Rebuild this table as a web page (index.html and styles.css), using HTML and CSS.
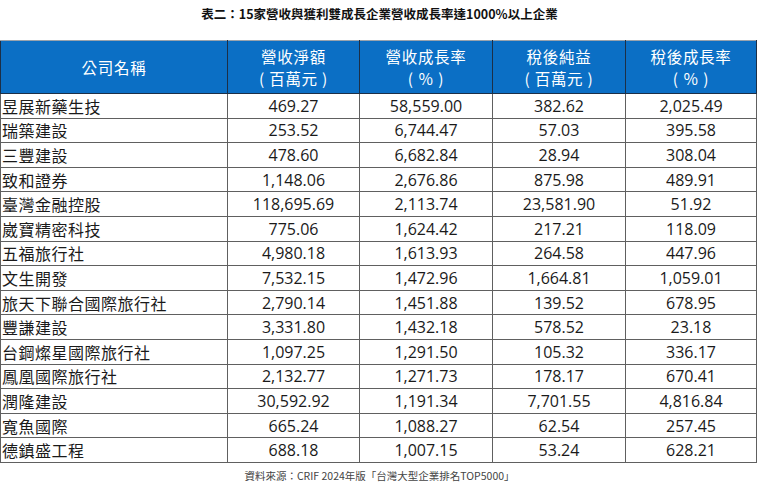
FILE: index.html
```html
<!DOCTYPE html>
<html lang="zh-Hant">
<head>
<meta charset="utf-8">
<title>表二</title>
<link rel="stylesheet" href="styles.css">
</head>
<body>
<div class="page">
  <h1 class="title">表二：15家營收與獲利雙成長企業營收成長率達1000%以上企業</h1>
  <table class="grid">
    <colgroup>
      <col class="c1"><col class="c2"><col class="c3"><col class="c4"><col class="c5">
    </colgroup>
    <thead>
      <tr>
        <th>公司名稱</th>
        <th><span class="hl">營收淨額</span><span class="hl">( 百萬元 )</span></th>
        <th><span class="hl">營收成長率</span><span class="hl">( ％ )</span></th>
        <th><span class="hl">稅後純益</span><span class="hl">( 百萬元 )</span></th>
        <th><span class="hl">稅後成長率</span><span class="hl">( ％ )</span></th>
      </tr>
    </thead>
    <tbody>
      <tr><td class="name">昱展新藥生技</td><td>469.27</td><td>58,559.00</td><td>382.62</td><td>2,025.49</td></tr>
      <tr><td class="name">瑞築建設</td><td>253.52</td><td>6,744.47</td><td>57.03</td><td>395.58</td></tr>
      <tr><td class="name">三豐建設</td><td>478.60</td><td>6,682.84</td><td>28.94</td><td>308.04</td></tr>
      <tr><td class="name">致和證券</td><td>1,148.06</td><td>2,676.86</td><td>875.98</td><td>489.91</td></tr>
      <tr><td class="name">臺灣金融控股</td><td>118,695.69</td><td>2,113.74</td><td>23,581.90</td><td>51.92</td></tr>
      <tr><td class="name">崴寶精密科技</td><td>775.06</td><td>1,624.42</td><td>217.21</td><td>118.09</td></tr>
      <tr><td class="name">五福旅行社</td><td>4,980.18</td><td>1,613.93</td><td>264.58</td><td>447.96</td></tr>
      <tr><td class="name">文生開發</td><td>7,532.15</td><td>1,472.96</td><td>1,664.81</td><td>1,059.01</td></tr>
      <tr><td class="name">旅天下聯合國際旅行社</td><td>2,790.14</td><td>1,451.88</td><td>139.52</td><td>678.95</td></tr>
      <tr><td class="name">豐謙建設</td><td>3,331.80</td><td>1,432.18</td><td>578.52</td><td>23.18</td></tr>
      <tr><td class="name">台鋼燦星國際旅行社</td><td>1,097.25</td><td>1,291.50</td><td>105.32</td><td>336.17</td></tr>
      <tr><td class="name">鳳凰國際旅行社</td><td>2,132.77</td><td>1,271.73</td><td>178.17</td><td>670.41</td></tr>
      <tr><td class="name">潤隆建設</td><td>30,592.92</td><td>1,191.34</td><td>7,701.55</td><td>4,816.84</td></tr>
      <tr><td class="name">寬魚國際</td><td>665.24</td><td>1,088.27</td><td>62.54</td><td>257.45</td></tr>
      <tr><td class="name">德鎮盛工程</td><td>688.18</td><td>1,007.15</td><td>53.24</td><td>628.21</td></tr>
    </tbody>
  </table>
  <p class="source">資料來源：CRIF 2024年版「台灣大型企業排名TOP5000」</p>
</div>
</body>
</html>
```

FILE: styles.css
```css
html, body {
  margin: 0;
  padding: 0;
  background: #ffffff;
}

.page {
  width: 759px;
  font-family: "Noto Sans CJK TC", "Noto Sans", sans-serif;
  color: #1a1a1a;
}

.title {
  margin: 0;
  padding-top: 5px;
  height: 40px;
  box-sizing: border-box;
  text-align: center;
  font-size: 12.5px;
  font-weight: 700;
  line-height: 18px;
  color: #111;
}

.grid {
  width: 756px;
  border-collapse: collapse;
  table-layout: fixed;
  margin-left: 0;
}

.c1 { width: 227px; }
.c2 { width: 132px; }
.c3 { width: 133px; }
.c4 { width: 133px; }
.c5 { width: 131px; }

.grid th {
  background: #0b6fc5;
  color: #ffffff;
  font-weight: 400;
  font-size: 15.5px;
  line-height: 22px;
  height: 53px;
  padding: 0;
  box-sizing: border-box;
  text-align: center;
  vertical-align: middle;
  letter-spacing: 0.7px;
  border: 1px solid #1c2f47;
  border-top: 1px solid #9aa3ad;
}

.hl {
  display: block;
  line-height: 22px;
  white-space: pre;
}

.grid td {
  height: 24.6px;
  padding: 0;
  box-sizing: border-box;
  border: 1px solid #606060;
  text-align: center;
  vertical-align: middle;
  font-family: "Open Sans", "Noto Sans CJK TC", sans-serif;
  font-size: 16px;
  line-height: 20px;
  color: #1a1a1a;
}

.grid td.name {
  text-align: left;
  padding-left: 1px;
  letter-spacing: 0.5px;
  font-family: "Noto Sans CJK TC", "Noto Sans", sans-serif;
}

.source {
  margin: 0;
  padding-top: 6px;
  text-align: center;
  font-size: 10.5px;
  line-height: 14px;
  color: #444;
}
```
